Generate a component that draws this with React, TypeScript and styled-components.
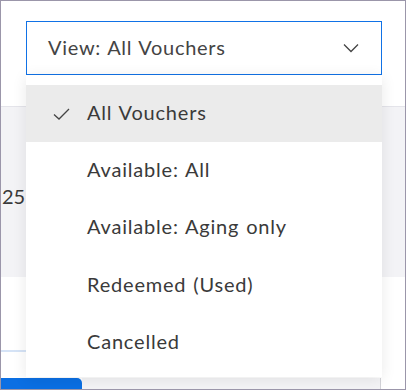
import React from "react";
import styled, { createGlobalStyle } from "styled-components";

const Global = createGlobalStyle`
  html, body { margin: 0; padding: 0; background: #ffffff; }
  body { font-family: Lato, "Noto Sans", Arial, sans-serif; }
  * { box-sizing: border-box; }
`;

const Frame = styled.div`
  position: relative;
  width: 406px;
  height: 390px;
  border: 1px solid #9b96aa;
  overflow: hidden;
  background: #ffffff;
  display: flex;
  flex-direction: column;
`;

const Header = styled.div`
  padding: 20px 23px 0 25px;
`;

const SelectBox = styled.div`
  height: 54px;
  border: 1px solid #1172e6;
  display: flex;
  align-items: center;
  justify-content: space-between;
  padding: 0 22px 3px 21px;
  color: #444444;
  font-size: 20px;
  letter-spacing: 0.7px;
  word-spacing: 1px;
`;

const Chevron = styled.svg`
  width: 16px;
  height: 10px;
  flex: none;
  margin-top: 3px;
`;

const Divider = styled.div`
  margin-top: 31px;
  height: 1px;
  background: #e4e4ea;
`;

const Panel = styled.div`
  height: 170px;
  background: #f3f3f6;
  display: flex;
  align-items: center;
  padding: 0 0 0 1px;
  font-size: 20px;
  color: #3a3a3a;
`;

const PanelRow = styled.div`
  margin-top: 8px;
`;

const Spacer = styled.div`
  height: 73px;
`;

const BlueLine = styled.div`
  height: 2px;
  background: #d5e3f6;
  width: 26px;
`;

const Footer = styled.div`
  margin-top: auto;
  display: flex;
  align-items: flex-end;
  height: 11px;
`;

const PrimaryButton = styled.div`
  width: 81px;
  height: 11px;
  background: #0b6fe3;
  border-top-right-radius: 5px;
`;

const SecondaryButton = styled.div`
  width: 299px;
  height: 11px;
  background: #f4f4f6;
  border-right: 1px solid #d3d3d8;
`;

const Menu = styled.ul`
  position: absolute;
  top: 74px;
  left: 25px;
  width: 356px;
  margin: 0;
  padding: 10px 0 6px;
  list-style: none;
  background: #ffffff;
  box-shadow: 0 2px 14px rgba(0, 0, 0, 0.09);
`;

const Item = styled.li<{ $active?: boolean }>`
  position: relative;
  height: 57.2px;
  display: flex;
  align-items: center;
  padding: 0 0 3px 61px;
  font-size: 20px;
  letter-spacing: 0.8px;
  word-spacing: 1px;
  color: #3a3a3a;
  background: ${(p) => (p.$active ? "#ebebeb" : "transparent")};
`;

const Check = styled.svg`
  position: absolute;
  left: 27px;
  top: 50%;
  margin-top: -6px;
  width: 17px;
  height: 12px;
`;

const items = [
  "All Vouchers",
  "Available: All",
  "Available: Aging only",
  "Redeemed (Used)",
  "Cancelled",
];

export default function App() {
  return (
    <>
      <Global />
      <Frame>
        <Header>
          <SelectBox>
            <span>View: All Vouchers</span>
            <Chevron viewBox="0 0 16 10">
              <path d="M1 1.5 L8 8.5 L15 1.5" fill="none" stroke="#444" strokeWidth="1.3" />
            </Chevron>
          </SelectBox>
        </Header>
        <Divider />
        <Panel>
          <PanelRow>25</PanelRow>
        </Panel>
        <Spacer />
        <BlueLine />
        <Footer>
          <PrimaryButton />
          <SecondaryButton />
        </Footer>
        <Menu>
          {items.map((label, i) => (
            <Item key={label} $active={i === 0}>
              {i === 0 && (
                <Check viewBox="0 0 17 12">
                  <path d="M1 6.5 L6 11 L16 1" fill="none" stroke="#444" strokeWidth="1.3" />
                </Check>
              )}
              {label}
            </Item>
          ))}
        </Menu>
      </Frame>
    </>
  );
}
